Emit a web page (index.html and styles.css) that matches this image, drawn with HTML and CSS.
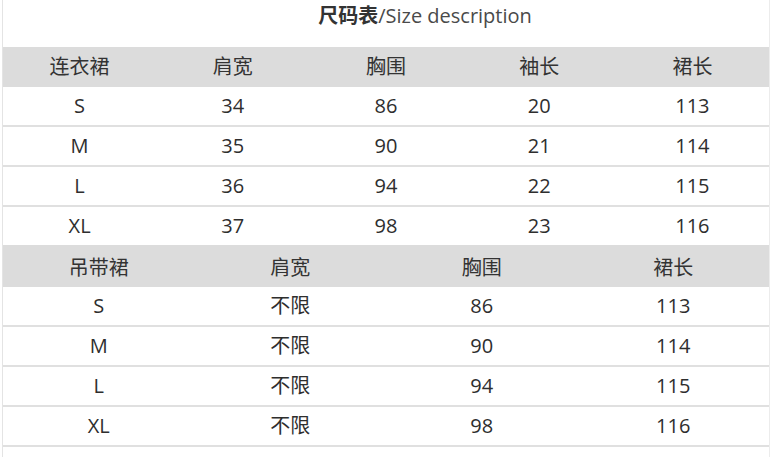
FILE: index.html
```html
<!DOCTYPE html>
<html lang="zh">
<head>
<meta charset="utf-8">
<link rel="stylesheet" href="styles.css">
</head>
<body>
<div class="page">
  <div class="title"><b>尺码表</b>/Size description</div>
  <div class="grid five">
    <div class="row head"><span>连衣裙</span><span>肩宽</span><span>胸围</span><span>袖长</span><span>裙长</span></div>
    <div class="row"><span>S</span><span>34</span><span>86</span><span>20</span><span>113</span></div>
    <div class="row"><span>M</span><span>35</span><span>90</span><span>21</span><span>114</span></div>
    <div class="row"><span>L</span><span>36</span><span>94</span><span>22</span><span>115</span></div>
    <div class="row last"><span>XL</span><span>37</span><span>98</span><span>23</span><span>116</span></div>
  </div>
  <div class="grid four">
    <div class="row head"><span>吊带裙</span><span>肩宽</span><span>胸围</span><span>裙长</span></div>
    <div class="row"><span>S</span><span>不限</span><span>86</span><span>113</span></div>
    <div class="row"><span>M</span><span>不限</span><span>90</span><span>114</span></div>
    <div class="row"><span>L</span><span>不限</span><span>94</span><span>115</span></div>
    <div class="row"><span>XL</span><span>不限</span><span>98</span><span>116</span></div>
  </div>
</div>
</body>
</html>
```
FILE: styles.css
```css
html, body {
  margin: 0;
  padding: 0;
  background: #fff;
}
body {
  font-family: "Open Sans", "Noto Sans CJK SC", sans-serif;
  color: #2e2e2e;
}
.page {
  margin-left: 2px;
  width: 766px;
  height: 457px;
  border-left: 1px solid #e4e4e4;
  border-right: 1px solid #ececec;
}
.title {
  height: 47px;
  box-sizing: border-box;
  padding-left: 78px;
  padding-top: 2px;
  text-align: center;
  font-size: 20px;
  line-height: 26px;
  color: #4a4a4a;
}
.title b {
  font-family: "Noto Sans CJK SC", sans-serif;
  font-weight: 700;
  color: #333;
}
.grid .row {
  display: grid;
  height: 38px;
  align-items: center;
  justify-items: center;
  font-size: 20px;
  border-bottom: 2px solid #e0e0e0;
}
.five .row { grid-template-columns: repeat(5, 1fr); }
.four .row { grid-template-columns: repeat(4, 1fr); }
.grid .row.head {
  background: #dcdcdc;
  height: 40px;
  border-bottom: 0;
  color: #333;
}
.four .row.head {
  height: 42px;
  box-sizing: border-box;
  padding-top: 3px;
}
.grid .row.last {
  border-bottom: 0;
}
.row span {
  line-height: 1;
}
```
